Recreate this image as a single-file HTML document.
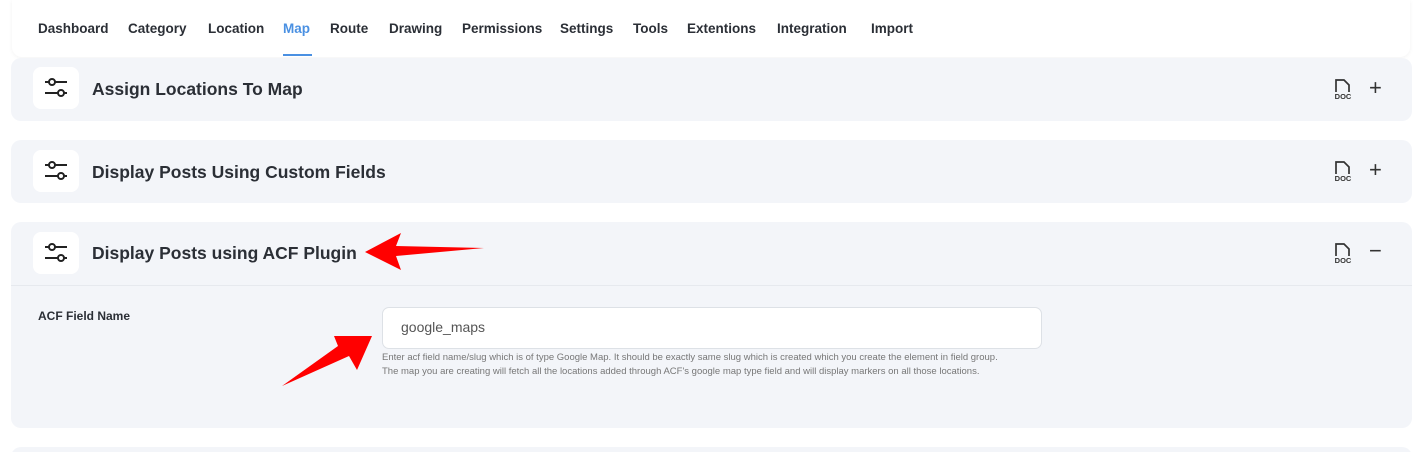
<!DOCTYPE html>
<html><head><style>
html,body{margin:0;width:1420px;height:452px;overflow:hidden}
body{background:#fff;font-family:"Liberation Sans",sans-serif;position:relative}
.nav{position:absolute;left:12px;top:0;width:1398px;height:57px;background:#fff;border-radius:0 0 10px 10px;box-shadow:0 1px 4px rgba(0,0,0,.05)}
.nav span{position:absolute;top:21px;font-size:13.5px;font-weight:bold;color:#2b2f36}
.panel{position:absolute;left:11px;width:1401px;background:#f3f5f9;border-radius:10px}
.ib{position:absolute;left:22px;width:46px;height:42px;background:#fff;border-radius:8px}
.t{position:absolute;left:81px;font-size:17.5px;font-weight:bold;color:#2b2f36}
.doc{position:absolute;left:1321px;width:22px;height:24px}
.pm{position:absolute;left:1358px;font-size:22px;color:#333;font-weight:300}
</style></head><body>
<div class="nav">
<span style="left:26px">Dashboard</span><span style="left:116px">Category</span><span style="left:196px">Location</span>
<span style="left:271px;color:#4a90e2">Map</span><div style="position:absolute;left:271px;top:54px;width:29px;height:2px;background:#4a90e2"></div>
<span style="left:318px">Route</span><span style="left:377px">Drawing</span><span style="left:450px">Permissions</span><span style="left:548px">Settings</span><span style="left:621px">Tools</span><span style="left:675px">Extentions</span><span style="left:765px">Integration</span><span style="left:859px">Import</span>
</div>

<svg width="0" height="0" style="position:absolute"><defs>
<symbol id="sl" viewBox="0 0 46 42"><g stroke="#222" stroke-width="2" fill="none"><line x1="12" y1="15" x2="16" y2="15"/><circle cx="19" cy="15" r="3"/><line x1="22" y1="15" x2="34" y2="15"/><line x1="12" y1="26" x2="25" y2="26"/><circle cx="28" cy="26" r="3"/><line x1="31" y1="26" x2="34" y2="26"/></g></symbol>
<symbol id="dc" viewBox="0 0 22 24"><path d="M4 15V3h8l5 5v7" stroke="#333" stroke-width="1.7" fill="none"/><text x="11" y="22" font-size="7.5" font-weight="bold" text-anchor="middle" fill="#333" font-family="Liberation Sans">DOC</text></symbol>
</defs></svg>

<div class="panel" style="top:58px;height:63px"><svg class="ib" style="top:9px" ><use href="#sl"/></svg><div class="t" style="top:21px">Assign Locations To Map</div><svg class="doc" style="top:19px"><use href="#dc"/></svg><div class="pm" style="top:17px">+</div></div>
<div class="panel" style="top:140px;height:63px"><svg class="ib" style="top:10px"><use href="#sl"/></svg><div class="t" style="top:22px">Display Posts Using Custom Fields</div><svg class="doc" style="top:19px"><use href="#dc"/></svg><div class="pm" style="top:17px">+</div></div>
<div class="panel" style="top:222px;height:206px">
<svg class="ib" style="top:10px"><use href="#sl"/></svg><div class="t" style="top:21px">Display Posts using ACF Plugin</div><svg class="doc" style="top:19px"><use href="#dc"/></svg><div class="pm" style="top:16px">−</div>
<div style="position:absolute;left:0;top:63px;width:100%;height:1px;background:#e6e9ee"></div>
<div style="position:absolute;left:27px;top:87px;font-size:12px;font-weight:bold;color:#2b2f36">ACF Field Name</div>
<div style="position:absolute;left:371px;top:85px;width:658px;height:40px;background:#fff;border:1px solid #dde1e6;border-radius:7px"><span style="position:absolute;left:18px;top:11px;font-size:14px;color:#555">google_maps</span></div>
<div style="position:absolute;left:371px;top:129px;font-size:9.5px;line-height:14px;color:#777;white-space:nowrap">Enter acf field name/slug which is of type Google Map. It should be exactly same slug which is created which you create the element in field group.<br>The map you are creating will fetch all the locations added through ACF's google map type field and will display markers on all those locations.</div>
</div>
<div class="panel" style="top:447px;height:20px"></div>

<svg style="position:absolute;left:0;top:0" width="1420" height="452">
<polygon points="365,252 401,233 396,246 484,248 396,256 401,270" fill="#f00"/>
<polygon points="372,336 357,370 349,356 282,386 338,346 334,336" fill="#f00"/>
</svg>
</body></html>
